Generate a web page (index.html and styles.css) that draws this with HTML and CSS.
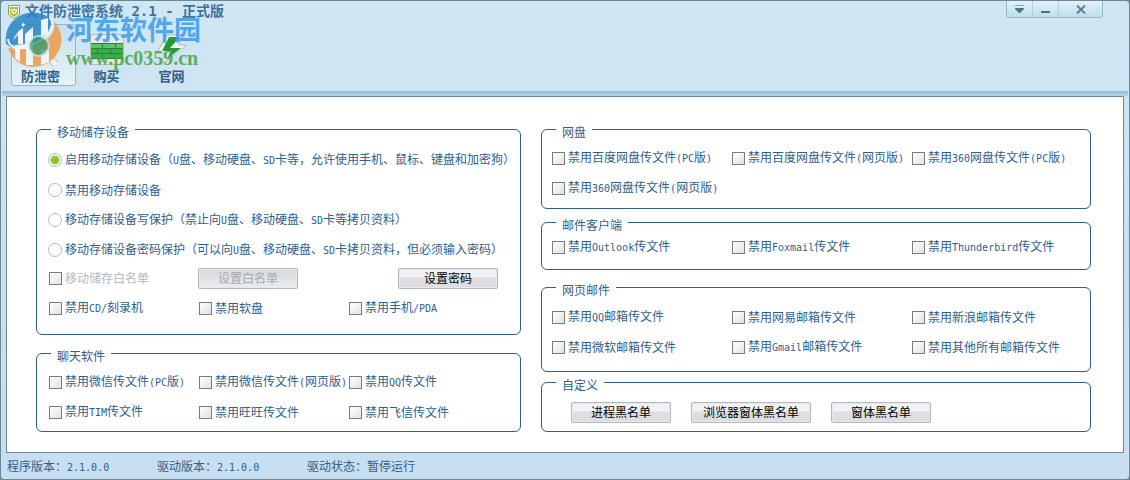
FILE: index.html
```html
<!DOCTYPE html>
<html lang="zh-CN">
<head>
<meta charset="utf-8">
<title>文件防泄密系统</title>
<link rel="stylesheet" href="styles.css">
</head>
<body>
<div class="window">
  <header class="header">
    <div class="titlebar">
      <svg class="title-icon" viewBox="0 0 12 14"><path d="M.5 .5h11v9l-5.500 4-5.500-4z" fill="#fff" stroke="#8a9f5c"/><path d="M2 2h8v7l-4 3-4-3z" fill="#a9c423"/><path d="M3 4l1.500 1L6 3l1.500 2L9 4v3L7.500 8v1h-3V8L3 7z" fill="#f3f7d5"/><path d="M4.500 6.500h3" stroke="#7e9d24"/></svg>
      <h1 class="title">文件防泄密系统 2.1 - 正式版</h1>
      <div class="controls">
        <button class="control" aria-label="菜单"><svg width="10" height="9" viewBox="0 0 10 9"><path d="M0 .5h9" stroke="#7da5bd"/><path d="M0 3h9v1L5 8H4L0 4z" fill="#4e718c"/></svg></button>
        <button class="control" aria-label="最小化"><svg width="10" height="9" viewBox="0 0 10 9"><path d="M0 6h9v2H0z" fill="#4e718c"/></svg></button>
        <button class="control control-close" aria-label="关闭"><svg width="10" height="9" viewBox="0 0 10 9"><path d="M1 .5l8 8M9 .5l-8 8" stroke="#5b7d97" stroke-width="2"/></svg></button>
      </div>
    </div>
    <nav class="toolbar">
      <button class="tool tool-active">
        <svg width="36" height="32" viewBox="0 0 36 32"><path d="M24 21l9 9" stroke="#f3f1ee" stroke-width="4"/><path d="M27 20l8 8M22 24l8 8" stroke="#c3b4ac"/><circle cx="15" cy="12" r="12" fill="#e9f2f4" stroke="#b9c9cf"/><circle cx="15" cy="12" r="9" fill="#4eae61"/></svg>
        防泄密
      </button>
      <button class="tool">
        <svg width="34" height="32" viewBox="0 0 34 32"><path d="M.5 .5h33v30H.5z" fill="#e6eaec" stroke="#b3bfc5"/><path d="M1 9h32v16H1z" fill="#35ad49"/><path d="M1 9h32v5H1z" fill="#5cc46b"/><path d="M1 9.500h32M1 14.500h32M1 19.500h32M1 24.500h32M12.500 9v5M25.500 9v5M7.500 14v5M20.500 14v5M12.500 19v5M25.500 19v5" stroke="#238535"/></svg>
        购买
      </button>
      <button class="tool">
        <svg width="34" height="32" viewBox="0 0 34 32"><path d="M12 1h18l-7 10h9L6 31l5-12H2z" fill="#f3f5f5" stroke="#b0bbc2"/><path d="M14 3h11l-10 11h11L12 25l4-8H7z" fill="#269936"/></svg>
        官网
      </button>
    </nav>
    <div class="watermark">
      <svg class="mark" viewBox="0 0 58 56">
        <path d="M3 36Q26 40 41 28Q52 20 49 9Q60 23 55 36Q48 54 28 55Q10 54 3 36z" fill="#f09a4a"/>
        <path d="M1 32Q-1 16 10 7Q20-1 33 1Q41 2 46 8Q47 18 38 25Q22 37 6 35z" fill="#2a86c8"/>
        <path d="M3 27Q4 38 21 35Q41 29 47 16Q49 11 45 6" fill="none" stroke="#f4faff" stroke-width="2"/>
        <path d="M8 28q5-10 10-12v16h-5v-9zM20 22l8-7v38h-7V37h-6v13l-5-4V33l10-1zM36 8l7-2v15l-7 5zM36 38h8v12l-8 3z" fill="#f4faff"/>
        <path d="M18 10l1 2 2 .5-2 1-.5 2-1-2-2-.5 2-1z" fill="#f4faff"/>
        <circle cx="34" cy="34" r="10" fill="#389878" stroke="#c9dfe2" stroke-width="2" opacity=".75"/>
      </svg>
      <div class="mark-text"><span class="mark-name">河东软件园</span><span class="mark-url">www.pc0359.cn</span></div>
    </div>
  </header>

  <main class="panel">
    <div class="column column-left">
      <fieldset class="group group-storage">
        <legend>移动储存设备</legend>
        <div class="row"><label class="option"><input type="radio" name="mode" checked><span>启用移动存储设备（<span class="latin">U</span>盘、移动硬盘、<span class="latin">SD</span>卡等，允许使用手机、鼠标、键盘和加密狗）</span></label></div>
        <div class="row"><label class="option"><input type="radio" name="mode"><span>禁用移动存储设备</span></label></div>
        <div class="row"><label class="option"><input type="radio" name="mode"><span>移动存储设备写保护（禁止向<span class="latin">U</span>盘、移动硬盘、<span class="latin">SD</span>卡等拷贝资料）</span></label></div>
        <div class="row"><label class="option"><input type="radio" name="mode"><span>移动存储设备密码保护（可以向<span class="latin">U</span>盘、移动硬盘、<span class="latin">SD</span>卡拷贝资料，但必须输入密码）</span></label></div>
        <div class="row row-whitelist">
          <label class="option option-disabled"><input type="checkbox" disabled><span>移动储存白名单</span></label>
          <button class="button" disabled>设置白名单</button>
          <button class="button">设置密码</button>
        </div>
        <div class="row columns-150">
          <label class="option"><input type="checkbox"><span>禁用<span class="latin">CD/</span>刻录机</span></label>
          <label class="option"><input type="checkbox"><span>禁用软盘</span></label>
          <label class="option"><input type="checkbox"><span>禁用手机<span class="latin">/PDA</span></span></label>
        </div>
      </fieldset>
      <fieldset class="group group-chat">
        <legend>聊天软件</legend>
        <div class="row columns-150">
          <label class="option"><input type="checkbox"><span>禁用微信传文件<span class="latin">(PC</span>版<span class="latin">)</span></span></label>
          <label class="option"><input type="checkbox"><span>禁用微信传文件<span class="latin">(</span>网页版<span class="latin">)</span></span></label>
          <label class="option"><input type="checkbox"><span>禁用<span class="latin">QQ</span>传文件</span></label>
        </div>
        <div class="row columns-150">
          <label class="option"><input type="checkbox"><span>禁用<span class="latin">TIM</span>传文件</span></label>
          <label class="option"><input type="checkbox"><span>禁用旺旺传文件</span></label>
          <label class="option"><input type="checkbox"><span>禁用飞信传文件</span></label>
        </div>
      </fieldset>
    </div>

    <div class="column column-right">
      <fieldset class="group group-disk">
        <legend>网盘</legend>
        <div class="row columns-180">
          <label class="option"><input type="checkbox"><span>禁用百度网盘传文件<span class="latin">(PC</span>版<span class="latin">)</span></span></label>
          <label class="option"><input type="checkbox"><span>禁用百度网盘传文件<span class="latin">(</span>网页版<span class="latin">)</span></span></label>
          <label class="option"><input type="checkbox"><span>禁用<span class="latin">360</span>网盘传文件<span class="latin">(PC</span>版<span class="latin">)</span></span></label>
        </div>
        <div class="row columns-180">
          <label class="option"><input type="checkbox"><span>禁用<span class="latin">360</span>网盘传文件<span class="latin">(</span>网页版<span class="latin">)</span></span></label>
        </div>
      </fieldset>
      <fieldset class="group group-client">
        <legend>邮件客户端</legend>
        <div class="row columns-180">
          <label class="option"><input type="checkbox"><span>禁用<span class="latin">Outlook</span>传文件</span></label>
          <label class="option"><input type="checkbox"><span>禁用<span class="latin">Foxmail</span>传文件</span></label>
          <label class="option"><input type="checkbox"><span>禁用<span class="latin">Thunderbird</span>传文件</span></label>
        </div>
      </fieldset>
      <fieldset class="group group-webmail">
        <legend>网页邮件</legend>
        <div class="row columns-180">
          <label class="option"><input type="checkbox"><span>禁用<span class="latin">QQ</span>邮箱传文件</span></label>
          <label class="option"><input type="checkbox"><span>禁用网易邮箱传文件</span></label>
          <label class="option"><input type="checkbox"><span>禁用新浪邮箱传文件</span></label>
        </div>
        <div class="row columns-180">
          <label class="option"><input type="checkbox"><span>禁用微软邮箱传文件</span></label>
          <label class="option"><input type="checkbox"><span>禁用<span class="latin">Gmail</span>邮箱传文件</span></label>
          <label class="option"><input type="checkbox"><span>禁用其他所有邮箱传文件</span></label>
        </div>
      </fieldset>
      <fieldset class="group group-custom">
        <legend>自定义</legend>
        <div class="row row-buttons">
          <button class="button">进程黑名单</button>
          <button class="button button-wide">浏览器窗体黑名单</button>
          <button class="button">窗体黑名单</button>
        </div>
      </fieldset>
    </div>
  </main>

  <footer class="status">
    <span class="status-item">程序版本：<span class="latin">2.1.0.0</span></span>
    <span class="status-item">驱动版本：<span class="latin">2.1.0.0</span></span>
    <span class="status-item">驱动状态：暂停运行</span>
  </footer>
</div>
</body>
</html>
```
FILE: styles.css
```css
* { box-sizing: border-box; }

body {
  margin: 0;
  font: 12px/16px "Noto Sans CJK SC", sans-serif;
  color: #2f608a;
  background: #6f8899;
}

button, input { font: inherit; color: inherit; margin: 0; }

.latin { font-family: "DejaVu Sans Mono", monospace; font-size: 10px; }

.window {
  display: flex;
  flex-direction: column;
  min-height: 100vh;
  border: 1px solid #6f8899;
  border-radius: 4px;
  background: linear-gradient(#cfe7f3 0, #cfe5f3 60px, #c8def1 400px);
}

/* header */
.header { position: relative; }
.header::after {
  content: "";
  display: block;
  height: 5px;
  margin: 5px 1px 0;
  background: linear-gradient(#93bbd6, #b3d6ea);
}
.titlebar { display: flex; align-items: flex-start; height: 23px; padding-left: 7px; }
.title-icon { width: 12px; height: 14px; margin-top: 4px; }
.title {
  margin: 1px 0 0 5px;
  flex: 1;
  font: bold 14px/18px "DejaVu Sans Mono", "Noto Sans CJK SC", monospace;
  color: #42719a;
}
.controls {
  display: flex;
  height: 17px;
  margin-right: 26px;
  border: 1px solid #92bcd4;
  border-top: 0;
  border-radius: 0 0 4px 4px;
  background: linear-gradient(#e3f1f8, #bfdeec);
}
.control {
  display: flex;
  justify-content: center;
  align-items: center;
  width: 26px;
  padding: 0;
  border: 0;
  border-right: 1px solid #a9cfe2;
  background: none;
}
.control-close { width: 43px; border-right: 0; }

.toolbar { display: flex; padding-left: 10px; }
.tool {
  display: flex;
  flex-direction: column;
  align-items: center;
  gap: 2px;
  width: 65px;
  height: 62px;
  padding: 9px 4px 0 0;
  border: 1px solid transparent;
  border-radius: 3px;
  background: none;
  font-size: 13px;
  font-weight: bold;
}
.tool-active { padding-right: 6px; border-color: #9bb5c3; background: linear-gradient(#c8e0eb, #e6f3f8); }

.watermark { position: absolute; left: 4px; top: 11px; display: flex; gap: 3px; opacity: 0.85; }
.mark { width: 58px; height: 56px; }
.mark-text { display: flex; flex-direction: column; }
.mark-name { font-size: 27px; line-height: 34px; font-weight: bold; color: #3d9be9; }
.mark-url { font: bold 20px/24px "Liberation Serif", serif; color: #4aa545; }

/* content panel */
.panel {
  flex: 1;
  display: grid;
  grid-template-columns: 485fr 550fr;
  gap: 20px;
  margin: 0 5px;
  padding: 23px 32px 20px 29px;
  border: 1px solid #6f8899;
  background: #fff;
}
.column { display: flex; flex-direction: column; min-width: 0; }

.group {
  min-width: 0;
  margin: 0;
  padding: 5px 10px;
  border: 1px solid #2f608a;
  border-radius: 6px;
}
.group legend { margin-left: 4px; padding: 6px 6px 0; line-height: 12px; }
.column-left .group { padding-left: 12px; }
.column-left legend { margin-left: 2px; }

.group-storage { padding: 7px 8px 11px; margin-bottom: 9px; }
.group-chat { padding-bottom: 4px; }
.group-disk { margin-bottom: 4px; }
.group-client { padding-top: 1px; padding-bottom: 7px; margin-bottom: 8px; }
.group-webmail { padding-top: 6px; padding-bottom: 9px; margin-bottom: 1px; }
.group-custom { padding-top: 6px; padding-bottom: 4px; }

.row { display: grid; align-items: center; height: 30px; white-space: nowrap; }
.columns-150 { grid-template-columns: repeat(3, 150px); }
.columns-180 { grid-template-columns: repeat(3, 180px); }
.row-whitelist { grid-template-columns: 149px 200px 100px; height: 26px; margin-bottom: 2px; }
.row-buttons { display: flex; gap: 20px; padding-left: 19px; }

.option { display: flex; align-items: center; gap: 3px; }
.option-disabled { color: #b3bac2; }

input[type="checkbox"] {
  appearance: none;
  flex: none;
  width: 13px;
  height: 13px;
  border: 1px solid #7c7c7c;
  background: linear-gradient(135deg, #fff, #e2e2e2);
}
input[type="radio"] {
  appearance: none;
  flex: none;
  width: 14px;
  height: 14px;
  margin-left: -1px;
  border: 1px solid #b7bcc1;
  border-radius: 50%;
  background: #fff;
}
input[type="radio"]:checked { background: radial-gradient(circle, #86ba2b 0, #9cc93f 4px, #fff 5px); }

.button {
  width: 100px;
  height: 21px;
  padding: 0;
  border: 1px solid #b3b8be;
  border-radius: 2px;
  background: linear-gradient(#f1f2f4 0 40%, #dcdee2 50%, #dcdee2);
  box-shadow: inset 0 0 0 1px #e6e8eb;
  line-height: 18px;
  color: #000;
}
.button:disabled { color: #a5a9ae; background: linear-gradient(#d5d8dc, #ebecee); }
.button-wide { width: 120px; }

/* status bar */
.status { display: flex; height: 26px; padding: 5px 6px; }
.status-item { width: 150px; }
```
